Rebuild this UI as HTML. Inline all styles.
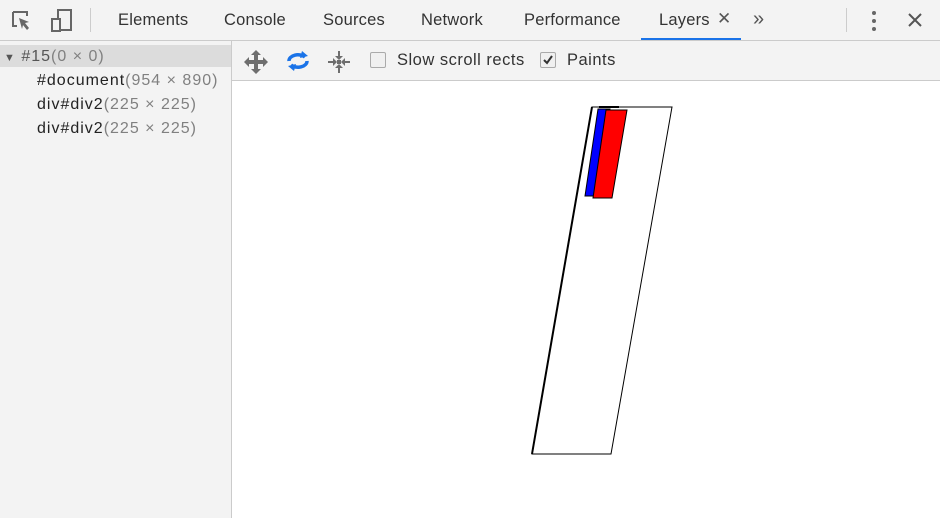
<!DOCTYPE html>
<html><head><style>
body{margin:0;width:940px;height:518px;overflow:hidden;background:#fff;font-family:"Liberation Sans",sans-serif;position:relative}
.tabs{position:absolute;left:0;top:0;width:940px;height:40px;background:#f3f3f3;border-bottom:1px solid #cbcbcb}
.tab{position:absolute;top:11px;font-size:16.5px;color:#333;letter-spacing:0.2px}
.left{position:absolute;left:0;top:41px;width:231px;height:477px;background:#f3f3f3;border-right:1px solid #cbcbcb}
.row{position:absolute;font-size:16px;color:#222;white-space:nowrap;letter-spacing:1px}
.row span{color:#808080}
.tb{position:absolute;left:232px;top:41px;width:708px;height:39px;background:#f3f3f3;border-bottom:1px solid #cbcbcb}
.cb{position:absolute;top:11px;width:14px;height:14px;border:1px solid #aaa;border-radius:2px;background:#f0f0f0}
</style></head><body>
<div class="tabs">
<svg style="position:absolute;left:10px;top:9px" width="24" height="24" viewBox="0 0 24 24"><path d="M3 3h14v4M3 3v14h4" fill="none" stroke="#666" stroke-width="2"/><path d="M9 9l10 4-4 1 4 5-2 2-4-5-1 4z" fill="#666"/></svg>
<svg style="position:absolute;left:50px;top:8px" width="24" height="26" viewBox="0 0 24 26"><rect x="8" y="2" width="13" height="20" fill="none" stroke="#666" stroke-width="2"/><rect x="2" y="11" width="8" height="12" fill="#f3f3f3" stroke="#666" stroke-width="2"/></svg>
<div style="position:absolute;left:90px;top:8px;width:1px;height:24px;background:#ccc"></div>
<div class="tab" style="left:118px">Elements</div>
<div class="tab" style="left:224px">Console</div>
<div class="tab" style="left:323px">Sources</div>
<div class="tab" style="left:421px">Network</div>
<div class="tab" style="left:524px">Performance</div>
<div class="tab" style="left:659px">Layers</div>
<div class="tab" style="left:717px;top:9px;font-size:17px;color:#555">✕</div>
<div style="position:absolute;left:641px;top:38px;width:100px;height:2px;background:#1a73e8"></div>
<div class="tab" style="left:753px;top:8px;font-size:20px;color:#555">»</div>
<div style="position:absolute;left:846px;top:8px;width:1px;height:24px;background:#ccc"></div>
<svg style="position:absolute;left:870px;top:10px" width="8" height="22"><circle cx="4" cy="3" r="2" fill="#666"/><circle cx="4" cy="11" r="2" fill="#666"/><circle cx="4" cy="19" r="2" fill="#666"/></svg>
<svg style="position:absolute;left:907px;top:12px" width="16" height="16"><path d="M2 2L14 14M14 2L2 14" stroke="#555" stroke-width="2"/></svg>
</div>
<div class="left">
<div style="position:absolute;left:0;top:4px;width:231px;height:22px;background:#dcdcdc"></div>
<div class="row" style="left:4px;top:7px;color:#555"><span style="font-size:11px;color:#555">▼</span> #15<span>(0 × 0)</span></div>
<div class="row" style="left:37px;top:31px">#document<span>(954 × 890)</span></div>
<div class="row" style="left:37px;top:55px">div#div2<span>(225 × 225)</span></div>
<div class="row" style="left:37px;top:79px">div#div2<span>(225 × 225)</span></div>
</div>
<div class="tb">
<svg style="position:absolute;left:12px;top:9px" width="24" height="24" viewBox="0 0 24 24" fill="#6e6e6e"><path d="M12 0l5 5h-3v5h5V7l5 5-5 5v-3h-5v5h3l-5 5-5-5h3v-5H5v3l-5-5 5-5v3h5V5H7z"/></svg>
<svg style="position:absolute;left:53px;top:8px" width="26" height="24" viewBox="0 0 26 24"><path d="M4 12a9 6 0 0 1 16-4" fill="none" stroke="#1a73e8" stroke-width="3.5"/><path d="M17 2l6 5-8 2z" fill="#1a73e8"/><path d="M22 12a9 6 0 0 1-16 4" fill="none" stroke="#1a73e8" stroke-width="3.5"/><path d="M9 22l-6-5 8-2z" fill="#1a73e8"/></svg>
<svg style="position:absolute;left:96px;top:10px" width="22" height="22" viewBox="0 0 22 22" fill="#6e6e6e"><path d="M11 9l-4-4h3V0h2v5h3zM11 13l4 4h-3v5h-2v-5H7zM9 11l-4 4v-3H0v-2h5V7zM13 11l4-4v3h5v2h-5v3z"/><rect x="9" y="9" width="4" height="4"/></svg>
<div class="cb" style="left:138px"></div>
<div class="row" style="left:165px;top:10px;font-size:16.5px;color:#333;letter-spacing:0.5px">Slow scroll rects</div>
<div class="cb" style="left:308px"><svg width="14" height="14"><path d="M3 7l3 3 5-7" fill="none" stroke="#333" stroke-width="2"/></svg></div>
<div class="row" style="left:335px;top:10px;font-size:16.5px;color:#333;letter-spacing:0.5px">Paints</div>
</div>
<svg style="position:absolute;left:0;top:0" width="940" height="518">
<polygon points="592,107 672,107 611,454 532,454" fill="#fff" stroke="#000" stroke-width="1"/>
<line x1="592" y1="107" x2="532" y2="454" stroke="#000" stroke-width="2"/>
<rect x="599" y="106" width="20" height="2" fill="#000"/>
<polygon points="598,109 610,109 594,196 585,196" fill="#0000ff" stroke="#000" stroke-width="1"/>
<polygon points="606,110 627,110 612,198 593,198" fill="#ff0000" stroke="#000" stroke-width="1"/>
</svg>
</body></html>
